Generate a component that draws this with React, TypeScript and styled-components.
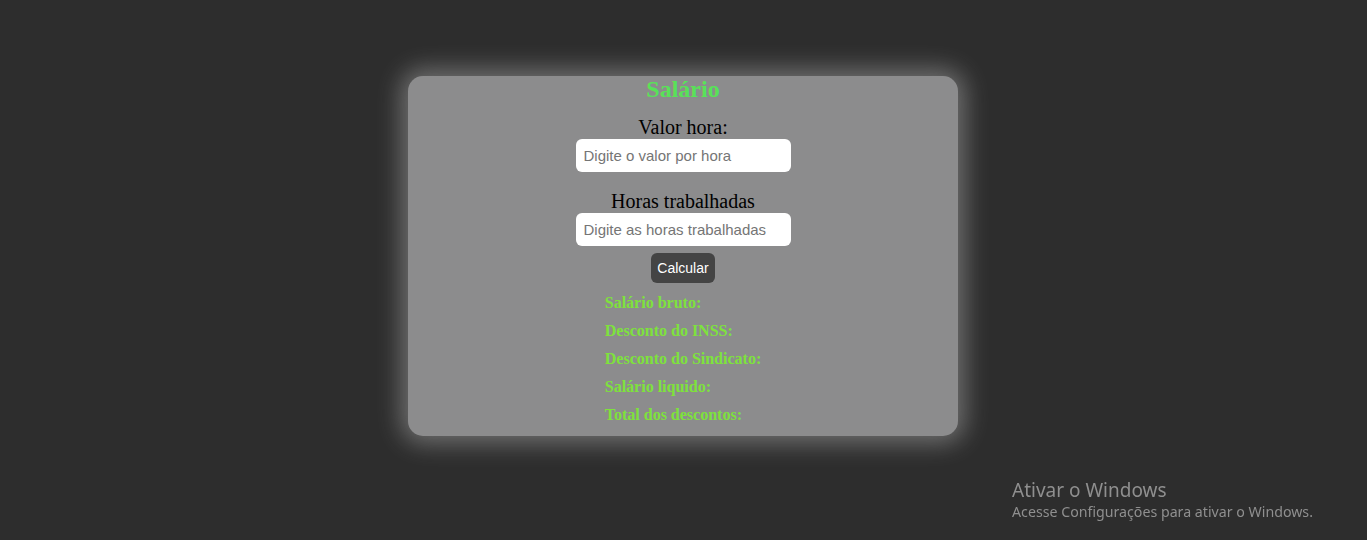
import React from "react";
import styled, { createGlobalStyle } from "styled-components";

const Global = createGlobalStyle`
  html, body { margin: 0; padding: 0; background: #2d2d2d; }
  body { font-family: "Liberation Serif", "Times New Roman", serif; min-height: 540px; }
`;

const Page = styled.div`
  display: flex;
  justify-content: center;
  padding-top: 76px;
  padding-right: 1px;
`;

const Card = styled.div`
  width: 550px;
  height: 360px;
  box-sizing: border-box;
  background: #8c8c8d;
  border-radius: 15px;
  box-shadow: 0 0 24px 7px rgba(195, 195, 195, 0.45);
  display: flex;
  flex-direction: column;
  align-items: center;
`;

const Title = styled.h2`
  margin: 0;
  font-size: 24px;
  line-height: 27px;
  font-weight: bold;
  color: #58e258;
`;

const Label = styled.label<{ $top: number }>`
  display: block;
  margin-top: ${(p) => p.$top}px;
  font-size: 20px;
  line-height: 23px;
  color: #000;
`;

const Input = styled.input`
  width: 215px;
  height: 33px;
  box-sizing: border-box;
  border: none;
  border-radius: 6px;
  padding: 0 8px;
  background: #fff;
  font-family: "Liberation Sans", Arial, sans-serif;
  font-size: 15px;
  outline: none;
  &::placeholder { color: #757575; }
`;

const Button = styled.button`
  margin-top: 7px;
  width: 64px;
  height: 30px;
  border: none;
  border-radius: 6px;
  background: #444444;
  color: #fff;
  font-family: "Liberation Sans", Arial, sans-serif;
  font-size: 14px;
  padding: 0;
`;

const Results = styled.div`
  margin-top: 11px;
  display: flex;
  flex-direction: column;
  align-items: flex-start;
  gap: 10px;
`;

const Result = styled.p`
  margin: 0;
  font-size: 16px;
  line-height: 18px;
  font-weight: bold;
  color: #7ee23c;
`;

const Watermark = styled.div`
  position: fixed;
  left: 1012px;
  top: 478px;
  font-family: "Noto Sans", "Open Sans", sans-serif;
  color: #8f8f8f;
`;

const WmTitle = styled.div`
  font-size: 19px;
  line-height: 24px;
`;

const WmSub = styled.div`
  font-size: 14.2px;
  line-height: 20px;
`;

export default function App() {
  const results = [
    "Salário bruto:",
    "Desconto do INSS:",
    "Desconto do Sindicato:",
    "Salário liquido:",
    "Total dos descontos:",
  ];
  return (
    <>
      <Global />
      <Page>
        <Card>
          <Title>Salário</Title>
          <Label $top={13}>Valor hora:</Label>
          <Input placeholder="Digite o valor por hora" />
          <Label $top={18}>Horas trabalhadas</Label>
          <Input placeholder="Digite as horas trabalhadas" />
          <Button>Calcular</Button>
          <Results>
            {results.map((r) => (
              <Result key={r}>{r}</Result>
            ))}
          </Results>
        </Card>
      </Page>
      <Watermark>
        <WmTitle>Ativar o Windows</WmTitle>
        <WmSub>Acesse Configurações para ativar o Windows.</WmSub>
      </Watermark>
    </>
  );
}
